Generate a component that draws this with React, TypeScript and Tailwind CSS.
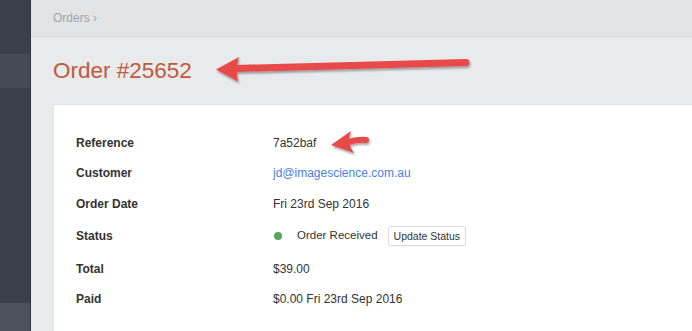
import React from "react";

type Row = {
  label: string;
  h: string;
  value: React.ReactNode;
};

const rows: Row[] = [
  { label: "Reference", h: "h-[31px]", value: <span>7a52baf</span> },
  {
    label: "Customer",
    h: "h-[30px]",
    value: <a className="text-[#4a7fe6]">jd@imagescience.com.au</a>,
  },
  { label: "Order Date", h: "h-[31px]", value: <span>Fri 23rd Sep 2016</span> },
  {
    label: "Status",
    h: "h-[34px]",
    value: (
      <div className="flex items-center">
        <span className="ml-[1px] h-[8px] w-[8px] rounded-full bg-[#5aa55a]" />
        <span className="ml-[15px] text-[11.5px]">Order Received</span>
        <button className="ml-[10px] h-[20px] rounded-[3px] border border-[#dcdcdc] bg-white px-[5px] text-[10.5px] leading-none text-[#333] shadow-[0_1px_1px_rgba(0,0,0,0.05)]">
          Update Status
        </button>
      </div>
    ),
  },
  { label: "Total", h: "h-[31px]", value: <span>$39.00</span> },
  { label: "Paid", h: "h-[30px]", value: <span>$0.00 Fri 23rd Sep 2016</span> },
];

// Annotation arrows drawn on top of the screenshot
function Arrows() {
  return (
    <svg
      className="pointer-events-none absolute left-0 top-0"
      width="692"
      height="331"
      viewBox="0 0 692 331"
    >
      <defs>
        <filter id="sh" x="-10%" y="-50%" width="120%" height="200%">
          <feDropShadow dx="1" dy="2" stdDeviation="1.2" floodColor="#000" floodOpacity="0.35" />
        </filter>
      </defs>
      <g filter="url(#sh)" fill="#e8494a" stroke="none">
        <line x1="466" y1="62.5" x2="234" y2="68.5" stroke="#e8494a" strokeWidth="7" strokeLinecap="round" />
        <path d="M216 69.5 L239 57 Q235 69 238 81.5 Z" />
        <path d="M346 143 Q356 139 366 140" fill="none" stroke="#e8494a" strokeWidth="6" strokeLinecap="round" />
        <path d="M331 145 L351 131 Q346 143 354 153 Z" />
      </g>
    </svg>
  );
}

export default function App() {
  return (
    <div
      className="relative flex h-[331px] w-[692px] overflow-hidden"
      style={{ fontFamily: '"Liberation Sans", Arial, sans-serif' }}
    >
      <aside className="flex w-[31px] shrink-0 flex-col border-r border-[#2f343d] bg-[#39404b]">
        <div className="h-[54px]" />
        <div className="h-[34px] bg-[#454b56]" />
        <div className="flex-1" />
        <div className="h-[28px] bg-[#4c525c]" />
      </aside>

      <main className="flex min-w-0 flex-1 flex-col bg-[#e9eaec]">
        <div className="flex h-[37px] shrink-0 items-center border-b border-[#dadbdd] bg-[#e3e4e6] pl-[22px] text-[12px] text-[#9ea3aa]">
          Orders ›
        </div>

        <div className="flex flex-1 flex-col pl-[22px]">
          <h1 className="mt-[23px] h-[22.5px] text-[22.5px] font-normal leading-[22.5px] text-[#c2593c]">
            Order #25652
          </h1>

          <div className="mt-[21.5px] flex-1 border-l border-t border-[#e0e1e3] bg-white pl-[22px] pt-[22px]">
            {rows.map((row) => (
              <div key={row.label} className={`flex items-center text-[12px] text-[#333] ${row.h}`}>
                <div className="w-[197px] shrink-0 font-bold">{row.label}</div>
                <div>{row.value}</div>
              </div>
            ))}
          </div>
        </div>
      </main>

      <Arrows />
    </div>
  );
}
